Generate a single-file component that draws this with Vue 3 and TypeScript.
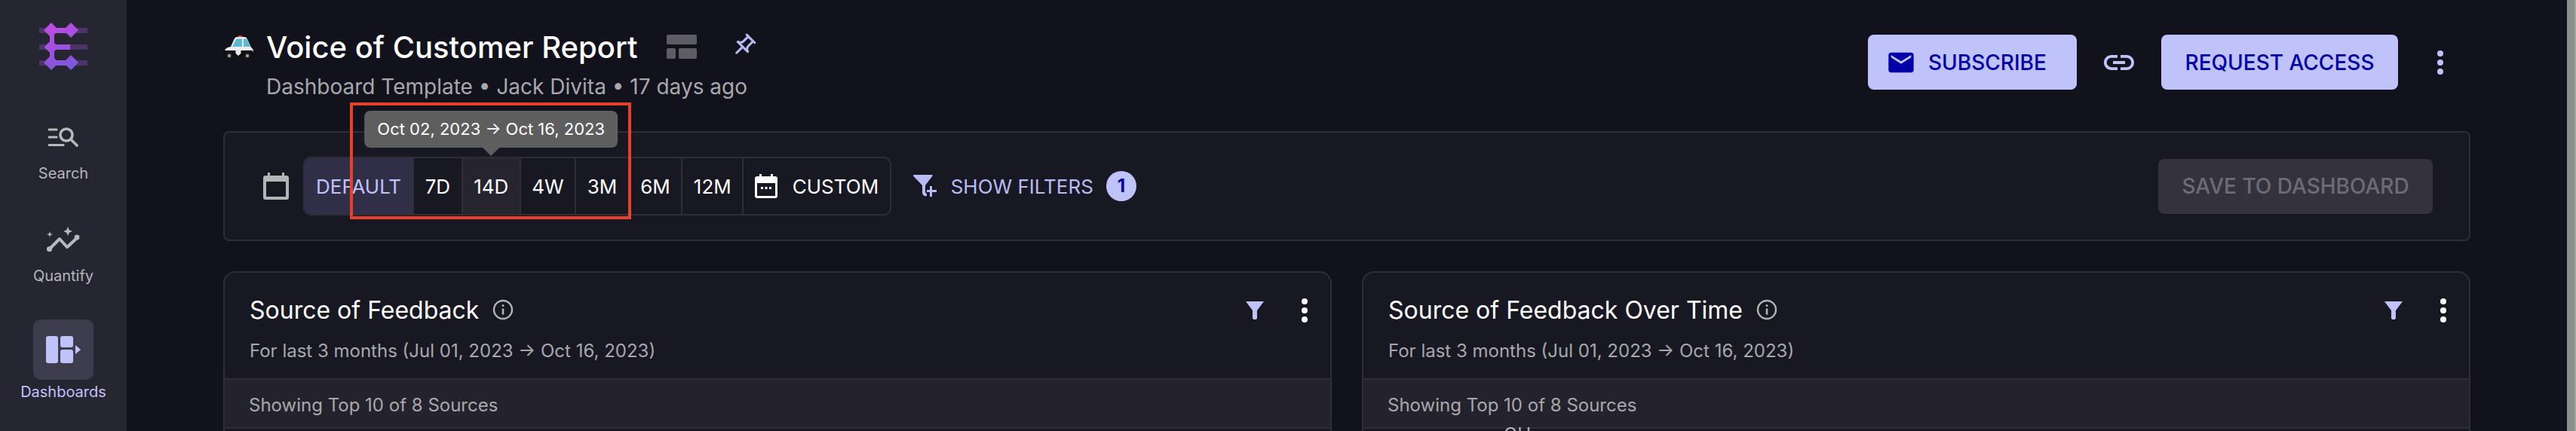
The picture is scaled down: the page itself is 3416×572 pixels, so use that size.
<script setup lang="ts">
interface NavItem {
  label: string
  active?: boolean
}

interface Card {
  title: string
  charts?: string
}

const navItems: NavItem[] = [
  { label: 'Search' },
  { label: 'Quantify' },
  { label: 'Dashboards', active: true }
]

const ranges = ['7D', '14D', '4W', '3M', '6M', '12M']

const cards: Card[] = [
  { title: 'Source of Feedback' },
  { title: 'Source of Feedback Over Time', charts: 'OU' }
]

const mailPath = 'M20 4H4c-1.1 0-1.99.9-1.99 2L2 18c0 1.1.9 2 2 2h16c1.1 0 2-.9 2-2V6c0-1.1-.9-2-2-2zm0 4l-8 5-8-5V6l8 5 8-5v2z'
const linkPath = 'M3.9 12c0-1.71 1.39-3.1 3.1-3.1h4V7H7c-2.76 0-5 2.24-5 5s2.24 5 5 5h4v-1.9H7c-1.71 0-3.1-1.39-3.1-3.1zM8 13h8v-2H8v2zm9-6h-4v1.9h4c1.71 0 3.1 1.39 3.1 3.1s-1.39 3.1-3.1 3.1h-4V17h4c2.76 0 5-2.24 5-5s-2.24-5-5-5z'
const pinPath = 'M14 4v5c0 1.12.37 2.16 1 3H9c.65-.86 1-1.9 1-3V4h4m3-2H7c-.55 0-1 .45-1 1s.45 1 1 1h1v5c0 1.66-1.34 3-3 3v2h5.97v7l1 1 1-1v-7H19v-2c-1.66 0-3-1.34-3-3V4h1c.55 0 1-.45 1-1s-.45-1-1-1z'
</script>

<template>
  <div class="app">
    <aside class="sidebar">
      <svg class="logo" width="64" height="64" viewBox="0 0 64 64">
        <defs>
          <linearGradient id="logoFill" gradientUnits="userSpaceOnUse" x1="10" y1="0" x2="40" y2="64">
            <stop offset="0" stop-color="#c44be2" />
            <stop offset="1" stop-color="#7a58dc" />
          </linearGradient>
        </defs>
        <g fill="#4a3468">
          <rect x="0" y="7" width="64" height="7" />
          <rect x="0" y="29" width="64" height="7" />
          <rect x="0" y="50" width="64" height="7" />
        </g>
        <g fill="url(#logoFill)">
          <path d="M16 0l10 10-10 10L6 10zM42 0l10 10-10 10-10-10zM16 23l9.500 9.500L16 42l-9.500-9.500zM16 43l10 10-10 10L6 53zM42 43l10 10-10 10-10-10z" />
          <path d="M16 7h26v7H20v15h21v7H20v14h22v7H16l-2-3V10z" />
        </g>
      </svg>

      <div v-for="item in navItems" :key="item.label" class="nav-item" :class="{ active: item.active }">
        <div class="nav-icon">
          <svg v-if="item.label === 'Search'" width="40" height="28" viewBox="0 0 40 28" fill="none" stroke="#b9b9bd">
            <path d="M1 4h10M1 14h10M1 24.500h19" stroke-width="3.200" stroke-linecap="round" />
            <circle cx="24" cy="11" r="8" stroke-width="3.600" />
            <path d="M30 17l8 8" stroke-width="3.600" stroke-linecap="round" />
          </svg>
          <svg v-else-if="item.label === 'Quantify'" width="46" height="36" viewBox="0 0 46 36">
            <path d="M4 31l14-14 10 11 14-13" fill="none" stroke="#b9b9bd" stroke-width="4" stroke-linecap="round" stroke-linejoin="round" />
            <circle cx="4.500" cy="30.500" r="3.600" fill="#b9b9bd" />
            <circle cx="41" cy="15" r="3.400" fill="#b9b9bd" />
            <path fill="#b9b9bd" d="M29 1l1.800 4.200L35 7l-4.200 1.800L29 13l-1.800-4.200L23 7l4.200-1.800zM5 7l1 3 3 1-3 1-1 3-1-3-3-1 3-1z" />
          </svg>
          <svg v-else width="46" height="36" viewBox="0 0 46 36" fill="#c0c2fa">
            <rect x="0" y="0" width="16" height="36" rx="3" />
            <rect x="19" y="0" width="17" height="15" rx="3" />
            <rect x="19" y="18" width="17" height="18" rx="3" />
            <path d="M39 12l7 6-7 6z" />
          </svg>
        </div>
        <span class="nav-label">{{ item.label }}</span>
      </div>
    </aside>

    <main class="main">
      <header class="top">
        <div class="heading">
          <svg class="car" width="40" height="32" viewBox="0 0 40 32">
            <rect x="20" y="0" width="5" height="3" rx="1" fill="#e8352f" />
            <path d="M2 22c0-4 2-6 8-7l4-9c1-2 2-4 5-4h9c2 0 3 1 4 3l5 11c2 1 3 3 3 6z" fill="#eceef0" />
            <path d="M12 15l4-8c.5-1.500 1.500-2.500 3-2.500h6V15zM27 4.500h3c1 0 1.800.5 2.300 2L36 15h-9z" fill="#5cb9cf" />
            <path d="M1 20h38c1 3 1 6 0 8H1c-1-2-1-5 0-8z" fill="#0c0c0e" />
            <path d="M16.500 18h7v6l-3.500 3-3.500-3z" fill="#e6e8ea" />
            <circle cx="8" cy="27" r="5" fill="#17171b" />
            <circle cx="8" cy="27" r="2.300" fill="#9a9ca0" />
            <circle cx="32" cy="27" r="5" fill="#17171b" />
            <circle cx="32" cy="27" r="2.300" fill="#9a9ca0" />
          </svg>
          <div class="heading-text">
            <div class="title-row">
              <h1 class="title">Voice of Customer Report</h1>
              <svg class="layout-icon" width="40" height="32" viewBox="0 0 40 32" fill="#5e5d66">
                <rect x="0" y="0" width="40" height="13" rx="2" />
                <rect x="0" y="18" width="12" height="14" rx="2" />
                <rect x="16" y="18" width="24" height="14" rx="2" />
              </svg>
              <svg class="pin-icon" width="36" height="36" viewBox="0 0 24 24" fill="#b9bcf4">
                <path :d="pinPath" transform="rotate(45 12 12)" />
              </svg>
            </div>
            <p class="meta">Dashboard Template • Jack Divita • 17 days ago</p>
          </div>
        </div>
        <div class="actions">
          <button class="btn-primary subscribe">
            <svg width="40" height="40" viewBox="0 0 24 24" fill="#0000a8"><path :d="mailPath" /></svg>
            SUBSCRIBE
          </button>
          <svg class="link-icon" width="48" height="48" viewBox="0 0 24 24" fill="#c0c2fa"><path :d="linkPath" /></svg>
          <button class="btn-primary request">REQUEST ACCESS</button>
          <div class="dots top-dots"><i /><i /><i /></div>
        </div>
      </header>

      <section class="filter-panel">
        <svg class="cal-icon" width="34" height="36" viewBox="0 0 34 36">
          <path fill="#b5b5b8" d="M6 0h3v4h16V0h3v4h3c1.700 0 3 1.300 3 3v26c0 1.700-1.300 3-3 3H3c-1.700 0-3-1.300-3-3V7c0-1.700 1.300-3 3-3h3zM4 12v20h26V12z" />
        </svg>
        <div class="range-group">
          <button class="range default">DEFAULT</button>
          <button v-for="r in ranges" :key="r" class="range" :class="{ hovered: r === '14D' }">
            {{ r }}
            <span v-if="r === '14D'" class="tooltip">Oct 02, 2023 → Oct 16, 2023</span>
          </button>
          <button class="range custom">
            <svg width="30" height="32" viewBox="0 0 30 32">
              <path fill="#fff" d="M6 0h3v3h12V0h3v3h3c1.700 0 3 1.300 3 3v23c0 1.700-1.300 3-3 3H3c-1.700 0-3-1.300-3-3V6c0-1.700 1.300-3 3-3h3zM3 12v17h24V12z" />
              <path fill="#fff" d="M8 17h3v3H8zM13.500 17h3v3h-3zM19 17h3v3h-3z" />
            </svg>
            CUSTOM
          </button>
        </div>
        <div class="show-filters">
          <svg width="32" height="30" viewBox="0 0 32 30" fill="#b9bcf4">
            <path d="M0 1.500C0 .5.500 0 1.500 0h23c1 0 1.500.5 1 1.500L16 14v8c0 2 1 3 2 3v3c-3 1-6-1-6-5v-9z" />
            <path d="M22 15h3v5h6v3h-6v6h-3v-6h-4v-3h4z" />
          </svg>
          <span>SHOW FILTERS</span>
          <span class="badge">1</span>
        </div>
        <button class="save" disabled>SAVE TO DASHBOARD</button>
      </section>

      <section class="cards">
        <article v-for="card in cards" :key="card.title" class="card">
          <div class="card-head">
            <div>
              <div class="card-title">
                {{ card.title }}
                <svg width="28" height="28" viewBox="0 0 28 28" fill="none" stroke="#b5b5b8">
                  <circle cx="14" cy="14" r="12" stroke-width="2.400" />
                  <path d="M14 12.500v8" stroke-width="2.600" />
                  <circle cx="14" cy="8.500" r="1.500" fill="#b5b5b8" stroke="none" />
                </svg>
              </div>
              <p class="card-sub">For last 3 months (Jul 01, 2023 → Oct 16, 2023)</p>
            </div>
            <div class="card-tools">
              <svg width="24" height="24" viewBox="0 0 24 24" fill="#c0c2fa">
                <path d="M0 0h24L15 12v10c0 1.500-1 2-3 2s-3-.5-3-2V12z" />
              </svg>
              <div class="dots white-dots"><i /><i /><i /></div>
            </div>
          </div>
          <div class="card-band">Showing Top 10 of 8 Sources</div>
          <div class="card-body"><span v-if="card.charts" class="chart-label">{{ card.charts }}</span></div>
        </article>
      </section>

      <div class="highlight" />
    </main>

    <div class="scrollbar" />
  </div>
</template>

<style>
html, body {
  margin: 0;
  background: #12121c;
}
</style>

<style scoped>
.app {
  display: flex;
  width: 3416px;
  height: 572px;
  overflow: hidden;
  background: #12121c;
  color: #fff;
  font-family: Inter, "Noto Sans", sans-serif;
}

.sidebar {
  flex: none;
  width: 168px;
  height: 572px;
  background: #262532;
  display: flex;
  flex-direction: column;
  align-items: center;
  padding-top: 30px;
  box-sizing: border-box;
}

.logo {
  margin-bottom: 64px;
}

.nav-item {
  display: flex;
  flex-direction: column;
  align-items: center;
  height: 136px;
  color: #b5b5b8;
}

.nav-icon {
  display: flex;
  justify-content: center;
  align-items: center;
  height: 48px;
}

.nav-label {
  font-size: 20px;
  line-height: 28px;
  margin-top: 10px;
}

.nav-item.active {
  margin-top: -6px;
  color: #c0c2fa;
}

.nav-item.active .nav-icon {
  width: 80px;
  height: 80px;
  background: #3e3d4d;
  border-radius: 10px;
}

.nav-item.active .nav-label {
  margin-top: 2px;
}

.main {
  position: relative;
  flex: 1;
  padding: 0 128px;
  min-width: 0;
}

.top {
  display: flex;
  justify-content: space-between;
  height: 174px;
}

.heading {
  display: flex;
  padding-top: 39px;
}

.car {
  margin: 8px 17px 0 0;
}

.title-row {
  display: flex;
  align-items: center;
  height: 48px;
}

.title {
  margin: 0;
  font-size: 40px;
  font-weight: 500;
  line-height: 48px;
}

.layout-icon {
  margin: -2px 0 0 38px;
}

.pin-icon {
  margin: -4px 0 0 44px;
}

.meta {
  margin: 12px 0 0;
  font-size: 28px;
  line-height: 32px;
  color: #a8a8ac;
}

.actions {
  display: flex;
  align-items: center;
  height: 73px;
  margin-top: 46px;
}

.btn-primary {
  display: flex;
  align-items: center;
  height: 73px;
  border: 0;
  border-radius: 8px;
  background: #c0c2fa;
  color: #0000a8;
  font: 500 28px Inter, sans-serif;
  box-sizing: border-box;
}

.subscribe {
  width: 277px;
  padding: 0 0 0 24px;
  gap: 16px;
}

.link-icon {
  margin: 0 32px 0 32px;
}

.request {
  width: 314px;
  justify-content: center;
}

.dots {
  display: flex;
  flex-direction: column;
  align-items: center;
}

.dots i {
  display: block;
  border-radius: 50%;
}

.top-dots {
  gap: 4px;
  margin: 0 36px 0 52px;
}

.top-dots i {
  width: 8px;
  height: 8px;
  background: #c0c2fa;
}

.filter-panel {
  display: flex;
  align-items: center;
  height: 146px;
  padding: 0 48px 0 51px;
  box-sizing: border-box;
  border: 2px solid #2e2d39;
  border-radius: 8px;
  background: #181823;
}

.range-group {
  display: flex;
  height: 78px;
  margin-left: 19px;
  border: 2px solid #2e2d39;
  border-radius: 10px;
  box-sizing: border-box;
}

.range {
  position: relative;
  display: flex;
  align-items: center;
  padding: 0 14.5px;
  border: 0;
  border-right: 2px solid #2e2d39;
  background: transparent;
  color: #fff;
  font: 400 26px Inter, sans-serif;
}

.range.default {
  padding: 0 15px;
  background: #312f47;
  color: #c0c2fa;
  border-radius: 8px 0 0 8px;
}

.range.hovered {
  background: #26252f;
}

.range.custom {
  gap: 20px;
  border-right: 0;
}

.tooltip {
  position: absolute;
  left: 50%;
  bottom: calc(100% + 14px);
  transform: translateX(-50%);
  padding: 0 17px;
  height: 49px;
  line-height: 49px;
  white-space: nowrap;
  background: #5e5e5e;
  border-radius: 8px;
  color: #fff;
  font-size: 22px;
  font-weight: 400;
}

.tooltip::after {
  content: "";
  position: absolute;
  left: 50%;
  top: 100%;
  margin-left: -11px;
  border-left: 11px solid transparent;
  border-right: 11px solid transparent;
  border-top: 11px solid #5e5e5e;
}

.show-filters {
  display: flex;
  align-items: center;
  margin-left: 29px;
  color: #b9bcf4;
  font-size: 26px;
  font-weight: 400;
}

.show-filters span:first-of-type {
  margin-left: 18px;
}

.badge {
  width: 40px;
  height: 40px;
  margin-left: 17px;
  border-radius: 50%;
  background: #c0c2fa;
  color: #0000a8;
  font-size: 24px;
  font-weight: 700;
  line-height: 40px;
  text-align: center;
}

.save {
  margin-left: auto;
  width: 364px;
  height: 73px;
  border: 0;
  border-radius: 8px;
  background: #34333d;
  color: #6d6c76;
  font: 500 28px Inter, sans-serif;
}

.cards {
  display: grid;
  grid-template-columns: 1fr 1fr;
  gap: 40px;
  margin-top: 40px;
}

.card {
  border: 2px solid #2e2d39;
  border-radius: 16px;
  background: #181823;
  overflow: hidden;
}

.card-head {
  display: flex;
  justify-content: space-between;
  height: 140px;
  padding: 0 30px 0 33px;
  box-sizing: border-box;
}

.card-title {
  display: flex;
  align-items: center;
  gap: 18px;
  height: 36px;
  margin-top: 31px;
  font-size: 32px;
  font-weight: 400;
}

.card-sub {
  margin: 22px 0 0;
  font-size: 24px;
  line-height: 30px;
  color: #a8a8ac;
}

.card-tools {
  display: flex;
  align-items: flex-start;
  gap: 50px;
  padding-top: 38px;
}

.white-dots {
  gap: 4px;
  margin-top: -4px;
}

.white-dots i {
  width: 8px;
  height: 8px;
  background: #fff;
}

.card-band {
  height: 63px;
  padding-left: 32px;
  border-top: 2px solid #2e2d39;
  border-bottom: 2px solid #2e2d39;
  background: #24232d;
  color: #a8a8ac;
  font-size: 24px;
  line-height: 67px;
}

.card-body {
  height: 60px;
}

.chart-label {
  display: block;
  margin: -4px 0 0 186px;
  font-size: 24px;
  line-height: 24px;
  color: #b5b5b8;
}

.highlight {
  position: absolute;
  left: 296px;
  top: 136px;
  width: 373px;
  height: 155px;
  box-sizing: border-box;
  border: 4px solid #e8412a;
  pointer-events: none;
}

.scrollbar {
  flex: none;
  width: 12px;
  background: #8d8f8d;
  border-right: 2px solid #a3a5a3;
  box-sizing: border-box;
}
</style>
